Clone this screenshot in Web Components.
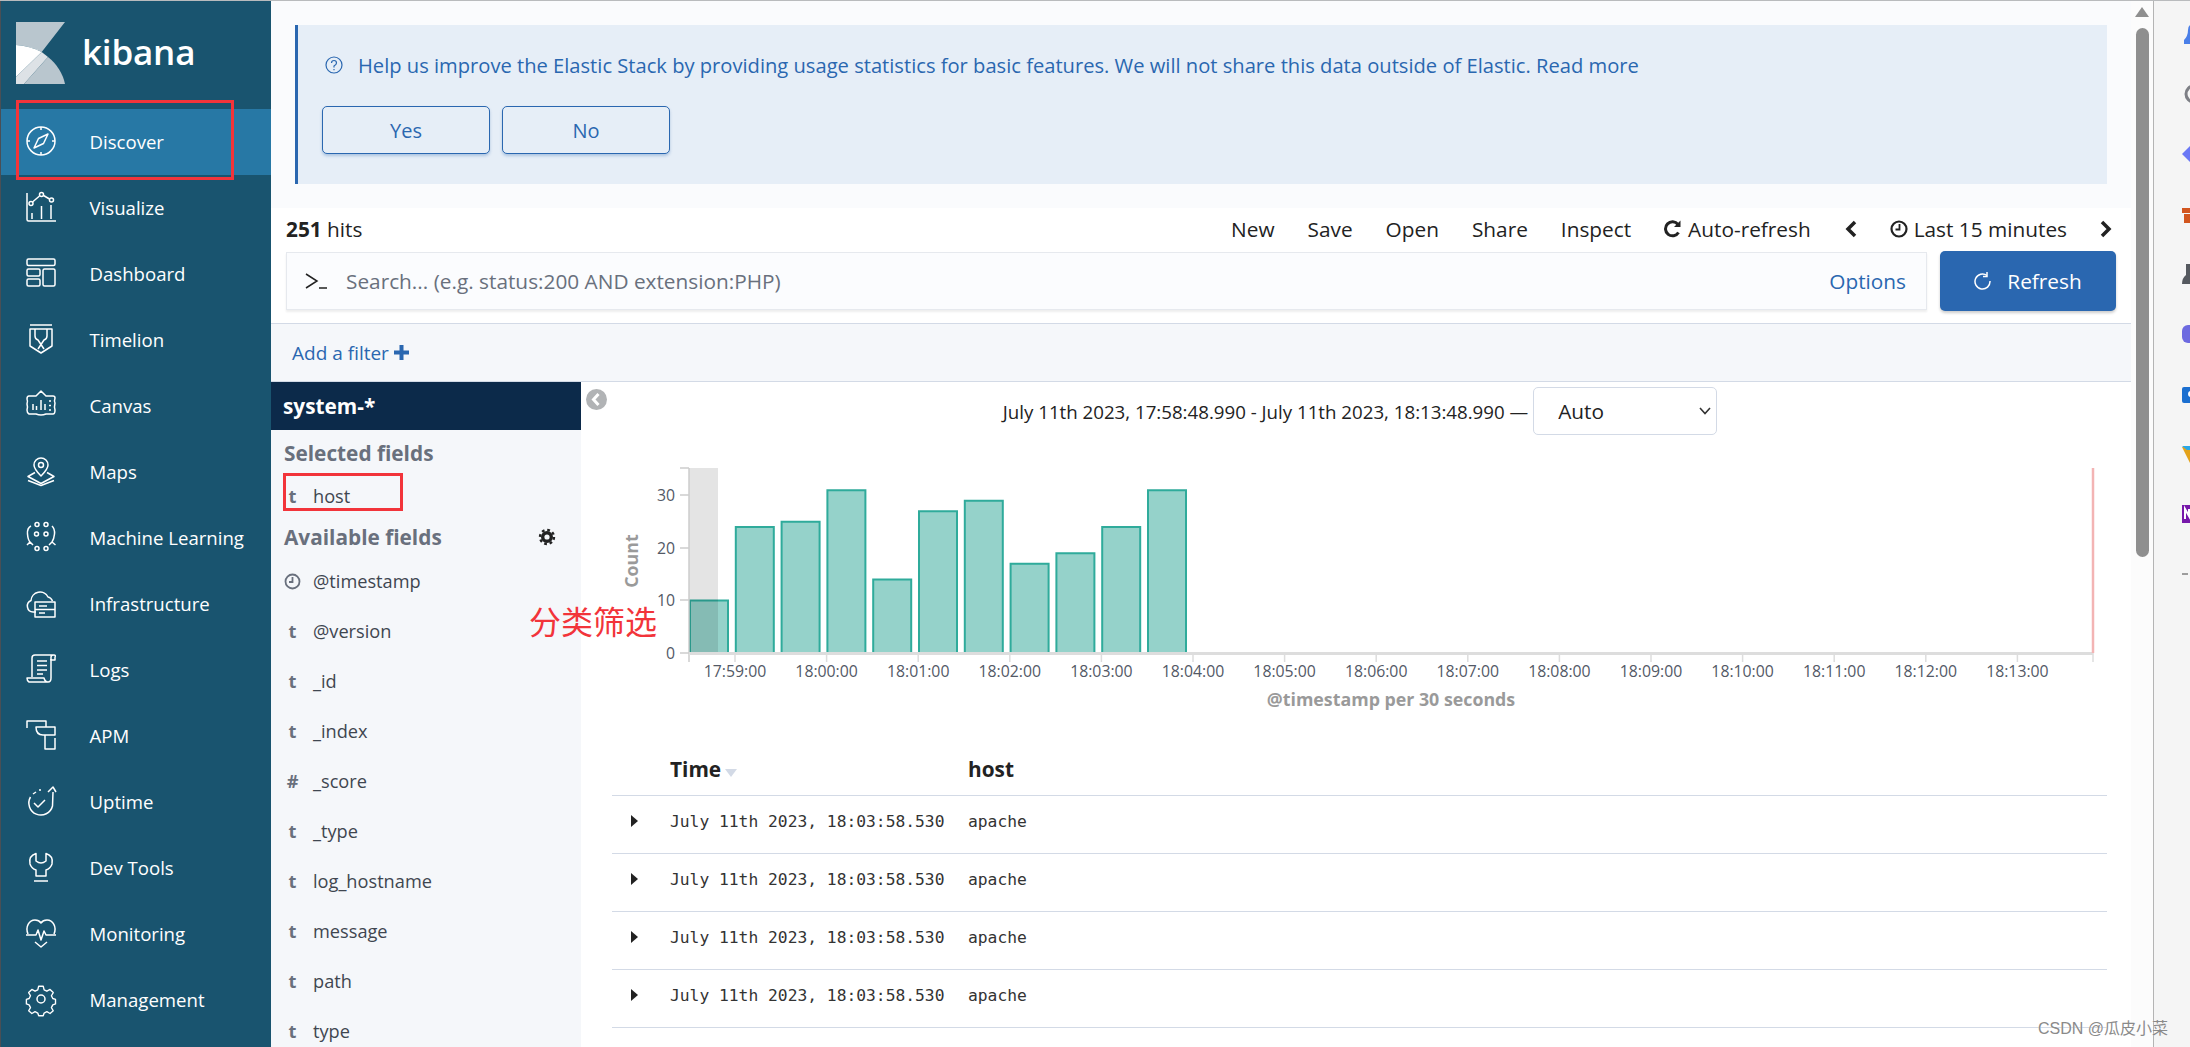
<!DOCTYPE html>
<html lang="en">
<head>
<meta charset="utf-8">
<title>Discover - Kibana</title>
<style>
  html, body { margin: 0; height: 100%; overflow: hidden; background: #f5f5f5; }
  body { font-family: "Open Sans", "Noto Sans CJK SC", sans-serif; }
</style>
</head>
<body>
<kbn-shell>
  <kbn-nav slot="nav">
    <nav-item icon="discover" active>Discover</nav-item>
    <nav-item icon="visualize">Visualize</nav-item>
    <nav-item icon="dashboard">Dashboard</nav-item>
    <nav-item icon="timelion">Timelion</nav-item>
    <nav-item icon="canvas">Canvas</nav-item>
    <nav-item icon="maps">Maps</nav-item>
    <nav-item icon="ml">Machine Learning</nav-item>
    <nav-item icon="infra">Infrastructure</nav-item>
    <nav-item icon="logs">Logs</nav-item>
    <nav-item icon="apm">APM</nav-item>
    <nav-item icon="uptime">Uptime</nav-item>
    <nav-item icon="devtools">Dev Tools</nav-item>
    <nav-item icon="monitoring">Monitoring</nav-item>
    <nav-item icon="management">Management</nav-item>
  </kbn-nav>
  <telemetry-banner slot="main"></telemetry-banner>
  <query-bar slot="main"></query-bar>
  <filter-bar slot="main"></filter-bar>
  <discover-body slot="main">
    <field-list slot="side"></field-list>
    <histogram-head slot="content"></histogram-head>
    <histogram-chart slot="content"></histogram-chart>
    <doc-table slot="content"></doc-table>
  </discover-body>
  <browser-rail slot="rail"></browser-rail>
</kbn-shell>

<script>
const navIcons = {
  discover: '<circle cx="15" cy="15" r="14"/><path d="M15 1v3M15 26v3M1 15h3M26 15h3"/><path d="M22 8l-4.500 9.500L8 22l4.500-9.500z"/>',
  visualize: '<path d="M1 1v26.500q0 1.500 1.500 1.500H30"/><path d="M6 21v6M15.500 14v13M25 13v14"/><path d="M6.500 10l7-6M17.500 3.500l6 3.500"/><circle cx="5" cy="11.500" r="2"/><circle cx="15.500" cy="2.500" r="2"/><circle cx="25.500" cy="8" r="2"/>',
  dashboard: '<rect x="1" y="1" width="28" height="6.500" rx="1.500"/><rect x="1" y="11" width="13" height="7" rx="1.500"/><rect x="1" y="21" width="13" height="7" rx="1.500"/><rect x="17" y="11" width="12" height="17" rx="1.500"/>',
  timelion: '<path d="M4 1h22M4 5h22v17l-11 7-11-7z"/><path d="M9 5v7q0 3 3 4l6 9M21 5v7q0 3-3 4l-6 9"/>',
  canvas: '<path d="M15 1l5 5h7q2 0 2 2-1 3 0 5-1 4 0 7 0 4-2 4h-7q-5 2-10 0H3q-2-1-2-4 1-3 0-6 1-3 0-5 0-3 2-3h7z"/><path d="M7 20v-6M10.500 20v-4M15 20V10M19 20v-6M23 11h2M23 15.500h2M23 20h2"/>',
  maps: '<path d="M15 20c-4-4-7-7-7-11a7 7 0 0 1 14 0c0 4-3 7-7 11z"/><circle cx="15" cy="9" r="2.500"/><path d="M9 16.500L2 20.500l13 7 13-7-7-4"/><path d="M2 24.500l13 5 13-5"/>',
  ml: '<circle cx="11" cy="2.500" r="2"/><circle cx="20" cy="2.500" r="2"/><circle cx="10.500" cy="12" r="2"/><circle cx="20" cy="12" r="2"/><circle cx="11" cy="26.500" r="2"/><circle cx="20" cy="26.500" r="2"/><path d="M5 4Q1 6 1.500 12T4 20M26 4q3 3 2.500 8T26 20M1 23l3-3 3 3M23 23l3-3 3.500 3"/>',
  infra: '<path d="M10 24H7a6 6 0 0 1-2-11.500A9 9 0 0 1 22 9q3 .500 4.500 4"/><rect x="9" y="14" width="20" height="15"/><path d="M9 21.500h20M13 18h8M13 25h6"/>',
  logs: '<path d="M28 1H9q-3 0-3 3v19M28 1q2 0 1 2.500V6h-4V3q0-2 3-2z"/><path d="M25 5v19q0 4-3 4H3q-2-1-2-4h17q1 4 4 4"/><path d="M11 7h10M11 11.500h10M11 16h10M11 20h6"/>',
  apm: '<path d="M1 8V1h19v6"/><path d="M10 7h19v8H17q-7 0-7-8zM19 15v14h10V18"/>',
  uptime: '<path d="M27 6l-.500 14a12 12 0 1 1-22-9"/><path d="M22 6l5-5 3 5"/><path d="M7 8l3-2M13 4h2M8 17l4 4 7-7"/>',
  devtools: '<path d="M10 1.500C5 3 3 7 4 12c1 3 3 5 6 6v6h10v-6c3-1 5-3 6-6 1-5-1-9-6-10.500V9q-5 4-10 0z"/><path d="M8 29h14"/>',
  monitoring: '<path d="M2 16C-1 9 3 2 9 2q4 0 6 3 2-3 6-3c6 0 10 7 7 14"/><path d="M0 17h10l2-5 3 10 3-9 2 4h10"/><path d="M9 24l6 5 6-5"/>',
  management: '<path d="M12.500 1h5l1 4 3 1.500 3.500-2 3.500 3.500-2 3.500 1.500 3 3 1v5l-3 1-1.500 3 2 3.500-3.500 3-3.500-2-3 1.500-1 3h-5l-1-3-3-1.500-3.500 2-3.500-3 2-3.500-1.500-3-3-1v-5l3-1 1.500-3-2-3.500L5 4.500l3.500 2 3-1.500z" transform="translate(1.300 1.300) scale(.91)"/><circle cx="15" cy="15" r="4"/>'
};

// sidebar
const navTemplate = document.createElement('template');
navTemplate.innerHTML = `
  <style>
    :host { display: block; width: 271px; height: 100%; box-sizing: border-box; background: #19546f; border-left: 1px solid #4a4f55; color: #fff; }
    .brand { height: 108px; box-sizing: border-box; padding: 21px 0 0 15px; display: flex; align-items: flex-start; gap: 17px; }
    .brand span { font: 600 35px/60px "Open Sans", sans-serif; letter-spacing: -.2px; }
  </style>
  <div class="brand">
    <svg width="49" height="62" viewBox="0 0 49 62">
      <path fill="#b9c6ce" d="M0 0h49L25.700 30C18 26 9 23.500 0 23z"/>
      <path fill="#fff" d="M0 23c9 .500 18 3 25.700 7L0 55z"/>
      <path fill="#dde2e6" d="M0 55l25.700-25 6.300 5L8 62H0z"/>
      <path fill="#b9c6ce" d="M32 35c9 7 15 17 17 27H8z"/>
    </svg>
    <span>kibana</span>
  </div>
  <slot></slot>
`;

class KbnNav extends HTMLElement {
  constructor() {
    super();
    this.attachShadow({ mode: 'open' });
    this.shadowRoot.appendChild(navTemplate.content.cloneNode(true));
  }
}
customElements.define('kbn-nav', KbnNav);

class NavItem extends HTMLElement {
  constructor() {
    super();
    this.attachShadow({ mode: 'open' });
    const icon = navIcons[this.getAttribute('icon')];
    this.shadowRoot.innerHTML = `
      <style>
        :host { display: flex; align-items: center; height: 66px; box-sizing: border-box; padding: 0 0 2px 25px; gap: 33.500px; font-size: 18.600px; color: #fff; }
        :host([active]) { background: #2778a5; }
        svg { width: 30px; height: 30px; flex: none; fill: none; stroke: #fff; stroke-width: 1.500; stroke-linejoin: round; overflow: visible; }
      </style>
      <svg viewBox="0 0 30 30">${icon}</svg>
      <slot></slot>
    `;
  }
}
customElements.define('nav-item', NavItem);

// page frame + red annotations
const shellTemplate = document.createElement('template');
shellTemplate.innerHTML = `
  <style>
    :host { display: flex; height: 1047px; position: relative; overflow: hidden; box-sizing: border-box; border-top: 1px solid #b9bbbd; }
    .main { width: 1860px; flex: none; display: flex; flex-direction: column; background: #fff; overflow: hidden; }
    .track { width: 22px; flex: none; box-sizing: content-box; background: #fcfcfc; border-right: 1px solid #b4b4b4; position: relative; }
    .track i { position: absolute; left: 5px; top: 27px; width: 13px; height: 529px; border-radius: 7px; background: #8f8f8f; }
    .track b { position: absolute; left: 4px; top: 6px; border: 7px solid transparent; border-top: 0; border-bottom: 10px solid #8f8f8f; }
    .box { position: absolute; box-sizing: border-box; border: 3px solid #f2343a; }
    .note { position: absolute; left: 529px; top: 597px; color: #f2343a; font: 400 32px/44px "Noto Sans CJK SC", sans-serif; }
    .mark { position: absolute; left: 2038px; top: 1017px; color: #8a8a8a; font: 16px/22px "Liberation Sans", "Noto Sans CJK SC", sans-serif; text-shadow: 0 0 1px #fff; }
  </style>
  <slot name="nav"></slot>
  <div class="main"><slot name="main"></slot></div>
  <div class="track"><b></b><i></i></div>
  <slot name="rail"></slot>
  <div class="box" style="left:16px;top:99px;width:218px;height:80px"></div>
  <div class="box" style="left:283px;top:472px;width:120px;height:38px"></div>
  <div class="note">分类筛选</div>
  <div class="mark">CSDN @瓜皮小菜</div>
`;

class KbnShell extends HTMLElement {
  constructor() {
    super();
    this.attachShadow({ mode: 'open' });
    this.shadowRoot.appendChild(shellTemplate.content.cloneNode(true));
  }
}
customElements.define('kbn-shell', KbnShell);

// telemetry notice
class TelemetryBanner extends HTMLElement {
  constructor() {
    super();
    this.attachShadow({ mode: 'open' });
    this.shadowRoot.innerHTML = `
      <style>
        :host { display: block; height: 207px; box-sizing: border-box; padding: 24px 24px 0; background: #fafbfd; }
        .callout { height: 159px; box-sizing: border-box; background: #e6eef7; border-left: 3px solid #2a67b0; padding: 26px 24px 0; color: #2a67b0; }
        .title { display: flex; align-items: center; height: 28px; font-size: 20.150px; padding-left: 3px; gap: 15px; white-space: nowrap; }
        .title svg { width: 18px; height: 18px; flex: none; }
        .btns { display: flex; gap: 12px; margin-top: 27px; }
        button { width: 168px; height: 48px; box-sizing: border-box; border: 1px solid #2a67b0; border-radius: 5px; background: #e6eef7; color: #2a67b0; font: 20px "Open Sans", sans-serif; box-shadow: 0 2px 3px rgba(42,103,176,.3); }
      </style>
      <div class="callout">
        <div class="title">
          <svg viewBox="0 0 18 18" fill="none" stroke="#2a67b0" stroke-width="1.200"><circle cx="9" cy="9" r="8"/><path d="M6.500 7q0-2.500 2.500-2.500T11.500 7q0 1.500-2.500 3v1.500M9 13v1.300"/></svg>
          <span>Help us improve the Elastic Stack by providing usage statistics for basic features. We will not share this data outside of Elastic. Read more</span>
        </div>
        <div class="btns"><button>Yes</button><button>No</button></div>
      </div>
    `;
  }
}
customElements.define('telemetry-banner', TelemetryBanner);

// hits + top nav + search row
class QueryBar extends HTMLElement {
  constructor() {
    super();
    this.attachShadow({ mode: 'open' });
    this.shadowRoot.innerHTML = `
      <style>
        :host { display: block; height: 115px; box-sizing: border-box; padding: 0 15px; background: #fff; color: #222; font-size: 20.800px; }
        .top { display: flex; align-items: center; height: 43px; box-sizing: border-box; padding-bottom: 2px; }
        .hits { margin-right: auto; }
        .hits b { font-weight: 700; }
        .links { display: flex; align-items: center; gap: 33px; padding-right: 3px; }
        .links span { display: flex; align-items: center; gap: 6px; white-space: nowrap; }
        .search { display: flex; gap: 13px; height: 60px; }
        .input { flex: 1; display: flex; align-items: center; box-sizing: border-box; margin: 1px 0; padding: 0 20px 0 18px; background: #fbfcfe; border: 1px solid #e6e9ee; box-shadow: 0 2px 2px rgba(0,0,0,.07); color: #69707d; }
        .input svg { width: 24px; height: 18px; margin-right: 17px; flex: none; }
        .input a { margin-left: auto; color: #2a67b0; }
        .refresh { width: 176px; display: flex; align-items: center; justify-content: center; gap: 15px; background: #2a67b0; border-radius: 5px; color: #fff; box-shadow: 0 2px 3px rgba(0,0,0,.2); }
      </style>
      <div class="top">
        <div class="hits"><b>251</b> hits</div>
        <div class="links">
          <span>New</span><span>Save</span><span>Open</span><span>Share</span><span>Inspect</span>
          <span><svg width="18" height="18" viewBox="0 0 18 18" fill="none" stroke="#222" stroke-width="3"><path d="M14.500 12.500A7 7 0 1 1 14 4.500"/><path d="M16.500 .5v6.500h-6.500z" fill="#222" stroke="none"/></svg>Auto-refresh</span>
          <svg width="13" height="18" viewBox="0 0 13 18" fill="none" stroke="#222" stroke-width="3.500"><path d="M11 2L4 9l7 7"/></svg>
          <span><svg width="18" height="18" viewBox="0 0 18 18" fill="none" stroke="#222" stroke-width="2.200"><circle cx="9" cy="9" r="7.500"/><path d="M9.500 4v5.500H5.500" stroke-width="1.800"/></svg>Last 15 minutes</span>
          <svg width="13" height="18" viewBox="0 0 13 18" fill="none" stroke="#222" stroke-width="3.500"><path d="M2 2l7 7-7 7"/></svg>
        </div>
      </div>
      <div class="search">
        <div class="input">
          <svg viewBox="0 0 24 18" fill="none" stroke="#222" stroke-width="1.500"><path d="M1 2l11 7-11 7M14 16h8"/></svg>
          <span>Search... (e.g. status:200 AND extension:PHP)</span>
          <a>Options</a>
        </div>
        <div class="refresh">
          <svg width="18" height="20" viewBox="0 0 18 20" fill="none" stroke="#fff" stroke-width="1.500"><path d="M13 4.500A7.500 7.500 0 1 0 16 10"/><path d="M13 1v4.500H9"/></svg>
          <span>Refresh</span>
        </div>
      </div>
    `;
  }
}
customElements.define('query-bar', QueryBar);

class FilterBar extends HTMLElement {
  constructor() {
    super();
    this.attachShadow({ mode: 'open' });
    this.shadowRoot.innerHTML = `
      <style>
        :host { display: flex; align-items: center; gap: 5px; height: 59px; box-sizing: border-box; padding-left: 21px; background: #f5f7fa; border-top: 1px solid #d3dae6; border-bottom: 1px solid #d3dae6; color: #2a67b0; font-size: 19px; }
      </style>
      <span>Add a filter</span>
      <svg width="15" height="15" viewBox="0 0 15 15" fill="#2a67b0"><path d="M5.500 0h4v5.500H15v4H9.500V15h-4V9.500H0v-4h5.500z"/></svg>
    `;
  }
}
customElements.define('filter-bar', FilterBar);

const bodyTemplate = document.createElement('template');
bodyTemplate.innerHTML = `
  <style>
    :host { display: flex; flex: 1; min-height: 0; position: relative; }
    .content { flex: 1; min-width: 0; background: #fff; }
    .collapse { position: absolute; left: 315px; top: 7px; width: 21px; height: 21px; }
  </style>
  <slot name="side"></slot>
  <div class="content"><slot name="content"></slot></div>
  <svg class="collapse" viewBox="0 0 21 21"><circle cx="10.500" cy="10.500" r="10.500" fill="#b1b3b5"/><path d="M12.500 5l-5 5.500 5 5.500" fill="none" stroke="#fff" stroke-width="3"/></svg>
`;

class DiscoverBody extends HTMLElement {
  constructor() {
    super();
    this.attachShadow({ mode: 'open' });
    this.shadowRoot.appendChild(bodyTemplate.content.cloneNode(true));
  }
}
customElements.define('discover-body', DiscoverBody);

class FieldList extends HTMLElement {
  constructor() {
    super();
    this.attachShadow({ mode: 'open' });
    const row = (type, name) => `<div class="row"><span class="t">${type}</span><span>${name}</span></div>`;
    const clock = '<svg width="17" height="17" viewBox="0 0 17 17" fill="none" stroke="#69707d" stroke-width="1.800"><circle cx="8.500" cy="8.500" r="7"/><path d="M8.500 4v5H5"/></svg>';
    const fields = [['t', '@version'], ['t', '_id'], ['t', '_index'], ['#', '_score'], ['t', '_type'], ['t', 'log_hostname'], ['t', 'message'], ['t', 'path'], ['t', 'type']];
    this.shadowRoot.innerHTML = `
      <style>
        :host { display: block; width: 310px; flex: none; background: #f5f7fa; color: #3f4650; font-size: 18.200px; }
        .head { height: 48px; padding-left: 12px; display: flex; align-items: center; background: #0c2a4a; color: #fff; font-weight: 700; font-size: 20.800px; }
        h3 { margin: 0; padding-left: 13px; height: 30px; display: flex; align-items: center; justify-content: space-between; font-size: 20.800px; font-weight: 700; color: #69707d; }
        h3 svg { margin-right: 25px; }
        .row { display: flex; align-items: center; height: 50px; padding-left: 13px; color: #3f4650; }
        .t { width: 17px; margin-right: 12px; text-align: center; font-weight: 700; color: #69707d; display: flex; justify-content: center; }
      </style>
      <div class="head">system-*</div>
      <h3 style="margin-top:8px">Selected fields</h3>
      <div style="margin-top:3px">${row('t', 'host')}</div>
      <h3 style="margin-top:1px">Available fields
        <svg width="18" height="18" viewBox="0 0 18 18" fill="none" stroke="#222"><circle cx="9" cy="9" r="4.300" stroke-width="3.400"/><circle cx="9" cy="9" r="7" stroke-width="2.400" stroke-dasharray="2.750 2.750"/></svg>
      </h3>
      <div style="margin-top:4px">
        ${row(clock, '@timestamp')}
        ${fields.map(f => row(f[0], f[1])).join('')}
      </div>
    `;
  }
}
customElements.define('field-list', FieldList);

class HistogramHead extends HTMLElement {
  constructor() {
    super();
    this.attachShadow({ mode: 'open' });
    this.shadowRoot.innerHTML = `
      <style>
        :host { display: flex; align-items: center; justify-content: center; gap: 5px; height: 58px; box-sizing: border-box; padding: 3px 0 3px 8px; font-size: 18.700px; color: #222; white-space: nowrap; }
        .pick { position: relative; display: block; height: 48px; }
        select { appearance: none; width: 184px; height: 48px; box-sizing: border-box; padding-left: 24px; background: #fff; border: 1px solid #d3dae6; border-radius: 5px; font: 20.800px "Open Sans", sans-serif; color: #222; }
        .pick svg { position: absolute; right: 6px; top: 20px; pointer-events: none; }
      </style>
      <span>July 11th 2023, 17:58:48.990 - July 11th 2023, 18:13:48.990 —</span>
      <div class="pick">
        <select><option>Auto</option></select>
        <svg width="12" height="8" viewBox="0 0 12 8" fill="none" stroke="#333" stroke-width="1.600"><path d="M1 1l5 5.500L11 1"/></svg>
      </div>
    `;
  }
}
customElements.define('histogram-head', HistogramHead);

class HistogramChart extends HTMLElement {
  constructor() {
    super();
    this.attachShadow({ mode: 'open' });
    // coordinates below are page coordinates, the viewBox maps them
    const bars = [10, 24, 25, 31, 14, 27, 29, 17, 19, 24, 31];
    const base = 653, unit = 5.25;
    let s = '';
    bars.forEach((v, i) => {
      const x = 689 + i * 45.8;
      const h = v * unit;
      s += `<rect x="${x + 1}" y="${base - h}" width="38" height="${h}" fill="#95d2ca" stroke="#2fab9b" stroke-width="2"/>`;
    });
    s += '<rect x="689" y="468" width="29" height="185" fill="rgba(0,0,0,.105)"/>';
    let ticks = '', labels = '';
    const names = ['17:59:00', '18:00:00', '18:01:00', '18:02:00', '18:03:00', '18:04:00', '18:05:00', '18:06:00', '18:07:00', '18:08:00', '18:09:00', '18:10:00', '18:11:00', '18:12:00', '18:13:00'];
    names.forEach((n, i) => {
      const x = 735 + i * 91.6;
      ticks += `<path d="M${x} 653v9"/>`;
      labels += `<text x="${x}" y="677" text-anchor="middle">${n}</text>`;
    });
    let yAxis = '';
    [[30, 495], [20, 548], [10, 600], [0, 653]].forEach(p => {
      yAxis += `<path d="M680 ${p[1]}h9" stroke="#ccc" stroke-width="1.500"/><text x="675" y="${p[1] + 5.500}" text-anchor="end">${p[0]}</text>`;
    });
    this.shadowRoot.innerHTML = `
      <style>
        :host { display: block; height: 275px; }
        svg { display: block; }
        text { font: 15.800px "Open Sans", sans-serif; fill: #535966; }
        .title { font-size: 17.800px; font-weight: 700; fill: #9a9a9a; }
      </style>
      <svg width="1550" height="275" viewBox="581 440 1550 275">
        <path d="M680 468h9" stroke="#ccc" stroke-width="1.500"/>
        ${s}
        <path d="M689 468v194" stroke="#ccc" stroke-width="1.500"/>
        <g stroke="#ddd" stroke-width="1.500" fill="none">${ticks}<path d="M2093 653v9"/></g>
        <path d="M689 653.500H2093" stroke="#ddd" stroke-width="3"/>
        <path d="M2093 468v185" stroke="#f3b4b4" stroke-width="2.500"/>
        ${yAxis}
        ${labels}
        <text class="title" x="1391" y="706" text-anchor="middle">@timestamp per 30 seconds</text>
        <text class="title" x="0" y="0" text-anchor="middle" transform="translate(638 561) rotate(-90)">Count</text>
      </svg>
    `;
  }
}
customElements.define('histogram-chart', HistogramChart);

class DocTable extends HTMLElement {
  constructor() {
    super();
    this.attachShadow({ mode: 'open' });
    let rows = '';
    for (let i = 0; i < 5; i++) {
      rows += `<div class="row"><svg width="8" height="12" viewBox="0 0 8 12"><path fill="#222" d="M0 0l7 6-7 6z"/></svg><span class="time">July 11th 2023, 18:03:58.530</span><span>apache</span></div>`;
    }
    this.shadowRoot.innerHTML = `
      <style>
        :host { display: block; margin: 0 24px 0 31px; color: #222; }
        .head, .row { display: flex; align-items: center; position: relative; }
        .head { height: 81px; box-sizing: border-box; padding: 28px 0 0 58px; border-bottom: 1px solid #d3dae6; font-size: 20.800px; font-weight: 700; }
        .head .time { display: flex; align-items: center; gap: 4px; }
        .head i { width: 0; height: 0; border: 6px solid transparent; border-top: 8px solid #d3dae6; border-bottom: 0; margin-top: 8px; }
        .time { width: 298px; flex: none; }
        .row { height: 58px; box-sizing: border-box; padding: 0 0 7px 58px; border-bottom: 1px solid #d3dae6; font: 16.300px "DejaVu Sans Mono", monospace; color: #333; }
        .row svg { position: absolute; left: 19px; top: 19px; }
      </style>
      <div class="head"><span class="time">Time <i></i></span><span>host</span></div>
      ${rows}
    `;
  }
}
customElements.define('doc-table', DocTable);

// browser extensions strip, cropped at the window edge
class BrowserRail extends HTMLElement {
  constructor() {
    super();
    this.attachShadow({ mode: 'open' });
    const icons = [
      '<path fill="#4a7fe8" d="M2 16Q6 12 6 6t6-6v20H2z"/>',
      '<circle cx="12" cy="10" r="8" fill="none" stroke="#7d7f85" stroke-width="3"/>',
      '<path fill="#6a78f5" d="M0 10L10 0v20z"/>',
      '<path fill="#d2561f" d="M0 4h12v5H0zM2 10h10v9H2z"/>',
      '<path fill="#55595f" d="M4 0h8v20H0q0-6 4-9z"/>',
      '<rect x="0" y="1" width="20" height="18" rx="6" fill="#6d6ae0"/>',
      '<rect x="0" y="3" width="12" height="16" rx="2" fill="#1b6fd0"/><circle cx="9" cy="10" r="3" fill="#fff"/>',
      '<path fill="#e3a21a" d="M0 3h12v17L8 19z"/><path fill="#2aa7e8" d="M0 2h12v4H5z"/>',
      '<rect x="0" y="1" width="14" height="18" fill="#7719aa"/><path d="M3 15V5l4 7V5" fill="none" stroke="#fff" stroke-width="2"/>',
      '<path stroke="#444" stroke-width="1" d="M0 10h6"/>'
    ];
    this.shadowRoot.innerHTML = `
      <style>
        :host { flex: 1; display: block; padding: 23px 0 0 28px; overflow: hidden; background: #f5f5f5; }
        svg { display: block; margin-bottom: 40px; overflow: hidden; }
      </style>
      ${icons.map(i => `<svg width="8" height="20" viewBox="0 0 8 20">${i}</svg>`).join('')}
    `;
  }
}
customElements.define('browser-rail', BrowserRail);
</script>
</body>
</html>
